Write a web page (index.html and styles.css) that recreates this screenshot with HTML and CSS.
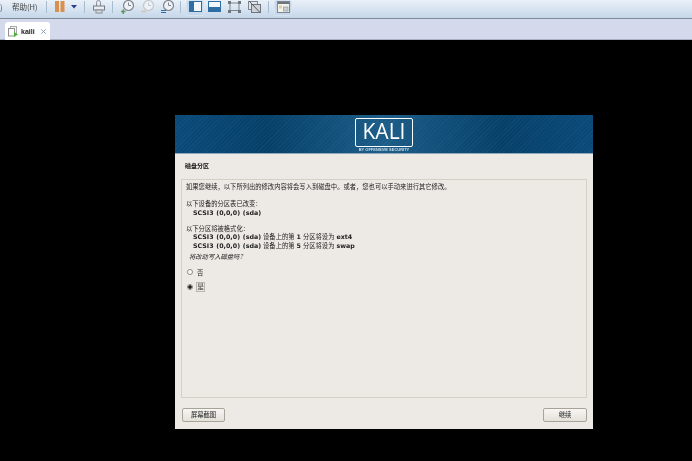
FILE: index.html
```html
<!DOCTYPE html>
<html lang="zh-CN">
<head>
    <meta charset="UTF-8">
    <title>kaili</title>
    <link rel="stylesheet" href="styles.css">
</head>
<body>
    <div class="toolbar">
        <span class="paren">)</span>
        <span class="menu">帮助(H)</span>
        <span class="sep"></span>
        <svg class="ico pause" width="10" height="12" viewBox="0 0 10 12"><rect width="4" height="11" fill="#d9904f"/><rect x="5.5" width="4" height="11" fill="#d9904f"/></svg>
        <svg class="ico caret" width="6" height="4" viewBox="0 0 6 4"><path d="M0 0h6L3 3.5z" fill="#27408b"/></svg>
        <span class="sep sep-small"></span>
        <svg class="ico send" width="12" height="14" viewBox="0 0 12 14"><path d="M3.500 6V2.500a2 2 0 0 1 4 0V6" fill="none" stroke="#8a8f96"/><rect x=".5" y="6" width="11" height="4" fill="#e8edf3" stroke="#777c84"/><rect x="3" y="10" width="6" height="3" fill="#d5dae0" stroke="#8a8f96"/></svg>
        <span class="sep sep-small"></span>
        <svg class="ico clock" width="13" height="14" viewBox="0 0 13 14"><circle cx="7.500" cy="5.500" r="5" fill="#eef2f6" stroke="#7f868e" stroke-width="1.2"/><path d="M7.500 2.500v3H10" fill="none" stroke="#7f868e"/><path d="M0 11.500h4.500M2.250 9.500v4.500" stroke="#5b9a5b" stroke-width="1.500"/></svg>
        <svg class="ico clock" width="13" height="14" viewBox="0 0 13 14"><circle cx="7.500" cy="5.500" r="5" fill="#eef2f6" stroke="#c3c8ce" stroke-width="1.2"/><path d="M7.500 2.500v3H10" fill="none" stroke="#c3c8ce"/><path d="M0 11.500h5" stroke="#d8c9b0" stroke-width="2"/></svg>
        <svg class="ico clock" width="13" height="14" viewBox="0 0 13 14"><circle cx="7.500" cy="5.500" r="5" fill="#eef2f6" stroke="#7f868e" stroke-width="1.2"/><path d="M7.500 2.500v3H10" fill="none" stroke="#7f868e"/><path d="M0 10.500h5M0 12.500h5" stroke="#2f6ea5" stroke-width="1.200"/></svg>
        <span class="sep sep-tight"></span>
        <span class="active"><svg width="13" height="12" viewBox="0 0 13 12"><rect x=".5" y=".5" width="12" height="10" fill="#f4f7fa" stroke="#2f6ea5"/><rect x="1" y="1" width="4" height="9" fill="#2f6ea5"/></svg></span>
        <svg class="ico view first-view" width="13" height="12" viewBox="0 0 13 12"><rect x=".5" y=".5" width="12" height="10" fill="#f4f7fa" stroke="#2f6ea5"/><rect x="1" y="6" width="11" height="4" fill="#2f6ea5"/></svg>
        <svg class="ico view" width="13" height="12" viewBox="0 0 13 12"><rect x="2" y="2" width="9" height="7.500" fill="none" stroke="#7f868e"/><path d="M0 0h3v3H0zM10 0h3v3h-3zM0 9h3v3H0zM10 9h3v3h-3z" fill="#6e757d"/></svg>
        <svg class="ico view" width="13" height="12" viewBox="0 0 13 12"><rect x=".5" y=".5" width="9" height="8" fill="#e4e8ec" stroke="#7f868e"/><rect x="3.500" y="3.500" width="9" height="8" fill="#cdd2d8" stroke="#6e757d"/><path d="M1 0l11 11.500" stroke="#555b62"/></svg>
        <span class="sep sep-small"></span>
        <span class="active"><svg width="13" height="12" viewBox="0 0 13 12"><rect x=".5" y=".5" width="12" height="11" fill="#f2f1ec" stroke="#7f868e"/><rect x="1" y="1" width="11" height="2" fill="#6e757d"/><rect x="6.500" y="6" width="4.500" height="4" fill="#c9ced4" stroke="#8a8f96" stroke-width=".6"/><rect x="2" y="4.500" width="3" height="3" fill="#e6cf9a"/></svg></span>
    </div>

    <div class="tabstrip">
        <div class="tab">
            <svg width="11" height="11" viewBox="0 0 11 11"><rect x="2.500" y=".5" width="6" height="7" fill="#f6f6f6" stroke="#a9a9a9"/><rect x=".5" y="2.500" width="6" height="7.500" fill="#fff" stroke="#8f8f8f"/><path d="M6 6l4 2.500L6 11z" fill="#4fb33a"/></svg>
            <span class="tabname">kaili</span>
            <svg class="tabclose" width="5" height="5" viewBox="0 0 5 5"><path d="M.3.300l4.400 4.400M4.700.300L.3 4.700" stroke="#7d95ad" stroke-width=".9"/></svg>
        </div>
    </div>

    <div class="screen">
        <div class="installer">
            <div class="banner">
                <div class="logo">
                    <div class="logobox">KALI</div>
                    <div class="logosub">BY OFFENSIVE SECURITY</div>
                </div>
            </div>
            <div class="content">
                <div class="title">磁盘分区</div>
                <div class="panel">
                    <p class="intro">如果您继续，以下所列出的修改内容将会写入到磁盘中。或者，您也可以手动来进行其它修改。</p>
                    <p class="head">以下设备的分区表已改变：</p>
                    <p class="item"><b>SCSI3 (0,0,0) (sda)</b></p>
                    <p class="head second">以下分区将被格式化：</p>
                    <p class="item"><b>SCSI3 (0,0,0) (sda)</b> 设备上的第 <b>1</b> 分区将设为 <b>ext4</b></p>
                    <p class="item"><b>SCSI3 (0,0,0) (sda)</b> 设备上的第 <b>5</b> 分区将设为 <b>swap</b></p>
                    <p class="ask">将改动写入磁盘吗？</p>
                    <div class="option first"><span class="radio"></span><span>否</span></div>
                    <div class="option"><span class="radio on"></span><span class="focus">是</span></div>
                </div>
                <div class="buttons">
                    <span class="btn shot">屏幕截图</span>
                    <span class="btn next">继续</span>
                </div>
            </div>
        </div>
    </div>
</body>
</html>
```

FILE: styles.css
```css
*{
    margin: 0;
    padding: 0;
    box-sizing: border-box;
}
html,body{
    height: 100%;
    overflow: hidden;
}
body{
    background-color: #000;
    font-family: "Noto Sans CJK SC", "Liberation Sans", sans-serif;
    display: flex;
    flex-direction: column;
}
.toolbar{
    height: 19px;
    flex: none;
    display: flex;
    align-items: center;
    padding-bottom: 5px;
    background: linear-gradient(#eaf0f8, #c5d7e9);
    border-bottom: 1px solid #7f8a96;
    color: #444;
    font-size: 8px;
    overflow: hidden;
}
.toolbar > *{
    filter: blur(.3px);
    flex: none;
}
.paren{
    width: 12px;
    color: #555;
}
.menu{
    width: 34px;
    font-size: 7.5px;
    white-space: nowrap;
}
.sep{
    width: 1px;
    height: 12px;
    background-color: #a9bdd1;
}
.sep-small{
    margin-left: 7px;
}
.sep-tight{
    margin-left: 6px;
}
.pause{
    margin-left: 8px;
}
.caret{
    margin-left: 6px;
}
.send{
    margin-left: 8px;
}
.clock{
    margin-left: 7px;
}
.send + .sep + .clock{
    margin-left: 8px;
}
.active{
    width: 18px;
    height: 16px;
    margin-left: 5px;
    margin-top: 3px;
    padding-bottom: 2px;
    display: flex;
    align-items: center;
    justify-content: center;
    background-color: #c6d9ec;
    border: 1px solid #d5e3f1;
    border-radius: 2px;
}
.view{
    margin-left: 7px;
}
.first-view{
    margin-left: 4px;
}
.tabstrip{
    height: 21px;
    flex: none;
    background-color: #d4d9ec;
    border-bottom: 1px solid #a9afc4;
    padding-left: 5px;
    display: flex;
    align-items: flex-end;
}
.tab{
    width: 45px;
    height: 18px;
    background-color: #fff;
    border-radius: 3px 3px 0 0;
    display: flex;
    align-items: center;
    padding-left: 3px;
    margin-bottom: -1px;
}
.tab > *{
    filter: blur(.25px);
}
.tabname{
    font-family: "Liberation Sans", sans-serif;
    font-size: 7px;
    font-weight: bold;
    color: #222;
    margin-left: 2px;
    width: 16px;
}
.tabclose{
    margin-left: 4px;
}
.screen{
    flex: 1;
    padding: 75px 0 0 175px;
}
.installer{
    width: 418px;
    height: 314px;
    display: flex;
    flex-direction: column;
    background-color: #edeae5;
}
.banner{
    height: 39px;
    flex: none;
    background:
        repeating-linear-gradient(135deg, rgba(255,255,255,.03) 0 1px, transparent 1px 3px),
        linear-gradient(90deg, #0a4a7a 0%, #064069 22%, #1b5d88 50%, #064069 78%, #0a4a7a 100%);
    border-bottom: 1px solid #8fa9bb;
    display: flex;
    justify-content: center;
}
.logo{
    width: 58px;
    padding-top: 3px;
    display: flex;
    flex-direction: column;
    align-items: center;
    filter: blur(.3px);
}
.logobox{
    width: 58px;
    height: 29px;
    border: 1.5px solid #fff;
    border-radius: 2px;
    color: #fff;
    font-family: "Open Sans", "Liberation Sans", sans-serif;
    font-size: 21px;
    line-height: 25px;
    text-align: center;
}
.logosub{
    font-family: "Liberation Sans", sans-serif;
    font-size: 4px;
    font-weight: bold;
    color: #cfdde8;
    white-space: nowrap;
    line-height: 4px;
    margin-top: 1px;
}
.content{
    flex: 1;
    display: flex;
    flex-direction: column;
    padding: 6px 6px 7px 6px;
    color: #222;
    font-size: 6.300px;
}
.title,.panel p,.option,.btn{
    filter: blur(.2px);
}
.title{
    height: 19px;
    padding-left: 4px;
    line-height: 11px;
    font-weight: bold;
    font-size: 6px;
    color: #111;
}
.panel{
    height: 219px;
    border: 1px solid #d5d0c6;
    padding: 2px 4px;
    line-height: 9px;
}
.panel b{
    font-family: "DejaVu Sans", sans-serif;
    font-size: 6.300px;
    line-height: 0;
}
.intro{
    margin-bottom: 7.500px;
}
.item{
    padding-left: 7px;
    white-space: pre-wrap;
    word-spacing: .6px;
}
.second{
    margin-top: 7px;
    margin-bottom: -.5px;
}
.ask{
    font-style: italic;
    margin-top: 2px;
    padding-left: 3px;
    line-height: 10px;
}
.option{
    display: flex;
    align-items: center;
    gap: 4px;
    height: 13px;
    margin-top: 2px;
    padding-left: 1px;
}
.first{
    margin-top: 3.500px;
}
.radio{
    width: 6px;
    height: 6px;
    border: 1px solid #8b8881;
    border-radius: 50%;
    background-color: #fff;
    flex: none;
}
.radio.on{
    background: radial-gradient(circle, #222 0 1.5px, #f7f6f3 2px);
}
.focus{
    border: 1px solid #b9b5ac;
    margin-left: -1px;
    padding: 0 .5px;
    line-height: 8px;
}
.buttons{
    display: flex;
    justify-content: space-between;
    margin-top: 10px;
    padding-left: 1px;
}
.btn{
    height: 14px;
    border: 1px solid #a8a398;
    border-radius: 2px;
    background: linear-gradient(#f7f6f3, #e4e1da);
    text-align: center;
    line-height: 12px;
}
.shot{
    width: 43px;
}
.next{
    width: 44px;
}
```
